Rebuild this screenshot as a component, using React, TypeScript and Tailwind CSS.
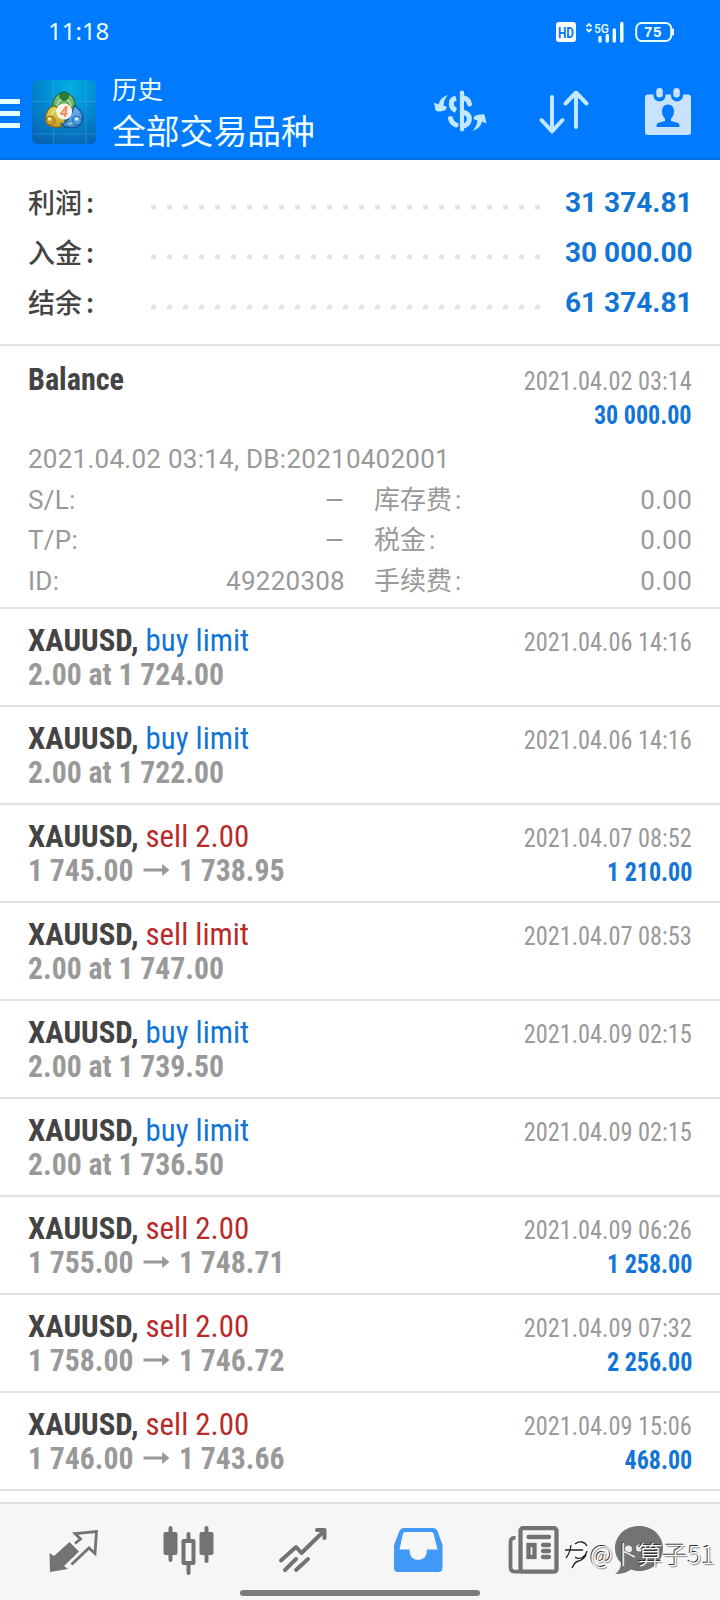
import React from "react";

type Deal = {
  kind: "buy" | "sell";
  action: string;
  time: string;
  at?: string;
  from?: string;
  to?: string;
  profit?: string;
};

const deals: Deal[] = [
  { kind: "buy", action: "buy limit", at: "2.00 at 1 724.00", time: "2021.04.06 14:16" },
  { kind: "buy", action: "buy limit", at: "2.00 at 1 722.00", time: "2021.04.06 14:16" },
  { kind: "sell", action: "sell 2.00", from: "1 745.00", to: "1 738.95", time: "2021.04.07 08:52", profit: "1 210.00" },
  { kind: "sell", action: "sell limit", at: "2.00 at 1 747.00", time: "2021.04.07 08:53" },
  { kind: "buy", action: "buy limit", at: "2.00 at 1 739.50", time: "2021.04.09 02:15" },
  { kind: "buy", action: "buy limit", at: "2.00 at 1 736.50", time: "2021.04.09 02:15" },
  { kind: "sell", action: "sell 2.00", from: "1 755.00", to: "1 748.71", time: "2021.04.09 06:26", profit: "1 258.00" },
  { kind: "sell", action: "sell 2.00", from: "1 758.00", to: "1 746.72", time: "2021.04.09 07:32", profit: "2 256.00" },
  { kind: "sell", action: "sell 2.00", from: "1 746.00", to: "1 743.66", time: "2021.04.09 15:06", profit: "468.00" },
];

const summary = [
  { label: "利润", value: "31 374.81" },
  { label: "入金", value: "30 000.00" },
  { label: "结余", value: "61 374.81" },
];

const details = [
  { l: "S/L:", v: "–", r: "库存费", rv: "0.00" },
  { l: "T/P:", v: "–", r: "税金", rv: "0.00" },
  { l: "ID:", v: "49220308", r: "手续费", rv: "0.00" },
];

const cond = "font-['Roboto_Condensed','Roboto',sans-serif]";

function StatusBar() {
  return (
    <div className="flex h-16 items-center pl-12 pr-[46px] text-[#f0ffff]">
      <span className="mb-0.5 font-['Noto_Sans',sans-serif] text-[24px] leading-none">11:18</span>
      <div className="ml-auto flex items-center">
        <svg width="120" height="24" viewBox="554 20 120 24">
          <rect x="556" y="22" width="20" height="20" rx="3" fill="#fff" />
          <text x="558" y="37.5" textLength="16" lengthAdjust="spacingAndGlyphs" className="fill-[#0079ff] font-['Roboto',sans-serif] text-[15px] font-bold">HD</text>
          <path d="M586.5 26.5l2.5-2.5 2.5 2.5M586.5 29l2.5 2.5 2.5-2.5" fill="none" stroke="#e6ffff" strokeWidth="1.8" />
          <text x="594" y="33" textLength="15" lengthAdjust="spacingAndGlyphs" className="fill-[#e6ffff] font-['Roboto',sans-serif] text-[13.5px] font-medium">5G</text>
          <path d="M600 37.5V41M607.3 35.5V41M614.3 30V41M621.8 23.5V41" fill="none" stroke="#f0ffff" strokeWidth="3.4" strokeLinecap="round" />
          <rect x="636.2" y="23" width="35" height="18" rx="5.5" fill="none" stroke="#e6ffff" strokeWidth="2" />
          <path d="M673 28.5V35.5" stroke="#e6ffff" strokeWidth="2" />
          <text x="644.3" y="37" textLength="17" className="fill-[#f0ffff] font-['Liberation_Sans',sans-serif] text-[14.5px] font-bold">75</text>
        </svg>
      </div>
    </div>
  );
}

function AppLogo() {
  return (
    <svg width="64" height="64" viewBox="0 0 64 64">
      <defs>
        <radialGradient id="bg" cx=".6" cy=".12" r=".95"><stop offset="0" stopColor="#00b0e4" /><stop offset=".5" stopColor="#0488d0" /><stop offset="1" stopColor="#0664b4" /></radialGradient>
        <linearGradient id="gr" x1="0" y1="0" x2="0" y2="1"><stop offset="0" stopColor="#8cc58a" /><stop offset="1" stopColor="#4c9a3a" /></linearGradient>
        <linearGradient id="ye" x1="0" y1="0" x2="0" y2="1"><stop offset="0" stopColor="#e8dc50" /><stop offset="1" stopColor="#c89a28" /></linearGradient>
        <linearGradient id="bl" x1="0" y1="0" x2="0" y2="1"><stop offset="0" stopColor="#6ab4ee" /><stop offset="1" stopColor="#3a8cd4" /></linearGradient>
      </defs>
      <rect width="64" height="64" rx="5" fill="url(#bg)" />
      <path d="M21.5 0V64M54 0V64M0 21.5H64M0 54H64" stroke="#5cc4ee" strokeOpacity=".3" />
      <path d="M32 13C39 13 43.500 19 43.500 27L40 33H24L20.500 27C20.500 19 25 13 32 13Z" fill="url(#gr)" stroke="#1f6a35" strokeWidth="1.200" />
      <path d="M22 26C28 28 34 36 33 45C29 48 21 48 16 45C11 40 14 28 22 26Z" fill="url(#ye)" stroke="#7a6a1c" strokeWidth="1.200" />
      <path d="M42 26C49 29 53 38 49 44C44 49 34 49 29 44C34 44 41 34 42 26Z" fill="url(#bl)" stroke="#14508c" strokeWidth="1.200" />
      <path d="M25 26Q26 19 32 19Q38 19 39.500 26M19 38Q19 31 25 30M36 44Q43 44 46 35" fill="none" stroke="#d8f0d8" strokeOpacity=".7" strokeWidth="1.400" />
      <circle cx="32.200" cy="16" r="4.200" fill="#2e7d3c" stroke="#1d5a2c" />
      <circle cx="18.500" cy="40.500" r="4.500" fill="#c99c30" stroke="#8a6a18" />
      <circle cx="17.500" cy="39" r="1.800" fill="#fbeaa0" />
      <circle cx="45" cy="40.500" r="4.500" fill="#4a9ee0" stroke="#1b5fa5" />
      <circle cx="44.500" cy="39" r="1.800" fill="#d8f0ff" />
      <circle cx="32.200" cy="31.500" r="8" fill="#f6f4ee" />
      <text x="32" y="36.800" textAnchor="middle" className="fill-[#f08858] font-['Roboto',sans-serif] text-[14.5px] font-bold italic">4</text>
    </svg>
  );
}

function Header() {
  return (
    <header className="h-40 shrink-0 border-b-2 border-[#0570dd] bg-[#007aff]">
      <StatusBar />
      <div className="flex h-[94px] text-[#f0ffff]">
        <div className="mt-[35px] flex h-[29px] w-5 flex-col justify-between">
          <i className="h-[5px] bg-[#e2ffff]" />
          <i className="h-[5px] bg-[#e2ffff]" />
          <i className="h-[5px] bg-[#e2ffff]" />
        </div>
        <div className="ml-3 mt-4"><AppLogo /></div>
        <div className="ml-4 mt-2 flex flex-col whitespace-nowrap font-['Noto_Sans_CJK_SC',sans-serif]">
          <span className="text-[25.5px] leading-[32px]">历史</span>
          <span className="mt-1 text-[33.8px] leading-[44px]">全部交易品种</span>
        </div>
        <svg className="ml-auto mt-5 shrink-0" width="264" height="56" viewBox="430 84 264 56">
          <g fill="none" stroke="#c2e8ff" strokeWidth="5">
            <path d="M462 92.500V129.500" strokeWidth="4.200" strokeLinecap="round" />
            <path d="M456 98C449.500 100 450 107.500 456 110.500" />
            <path d="M464 98Q468.500 99 469.500 104" strokeLinecap="round" />
            <path d="M450.500 118.500Q451.500 123 456 125" strokeLinecap="round" />
            <path d="M463.500 112.500C471 114 471.500 123.500 463.500 126" />
          </g>
          <path d="M448 95Q440 97.500 438.500 104.500L434 102.500L435.500 110.500Q440 112.500 445.500 110L447 107L443.500 105.500Q444 99 448 95ZM472.500 131Q480.500 128.500 482 121.500L486.500 123.500L484.500 114.500Q480 113.500 474.500 116L473.500 119L477.500 120.500Q476.500 127 472.500 131Z" fill="#c2e8ff" />
          <path d="M552 97V131M541.500 120L552 131.500L562.500 120M576 127V93M565.500 103.500L576 92.500L586.500 103.500" fill="none" stroke="#c2e8ff" strokeWidth="4" strokeLinecap="round" strokeLinejoin="round" />
          <path d="M648 94.500h5.500v1a6 6 0 0 0 12 0v-1h5.500v1a6 6 0 0 0 12 0v-1h5a3 3 0 0 1 3 3v34.500a3 3 0 0 1-3 3h-40a3 3 0 0 1-3-3v-34.500a3 3 0 0 1 3-3z" fill="#c8e2ff" />
          <rect x="656.300" y="88" width="6.500" height="9.500" rx="3.200" fill="#c8e2ff" />
          <rect x="673.300" y="88" width="6.500" height="9.500" rx="3.200" fill="#c8e2ff" />
          <path d="M668 104.500c4 0 6 3 6 6.500c0 3-1 5.500-3 7.500v2.500l7 2q1.500.5 1.500 4h-23q0-3.500 1.500-4l7-2v-2.500c-2-2-3-4.500-3-7.500c0-3.500 2-6.500 6-6.500z" fill="#007aff" />
        </svg>
        <div className="w-[26px] shrink-0" />
      </div>
    </header>
  );
}

function Summary() {
  return (
    <section className="h-[186px] shrink-0 border-b-2 border-[#e2e2e2] pt-[17px]">
      {summary.map((s) => (
        <div key={s.label} className="flex h-[50px] items-center pl-7 pr-7">
          <div className="flex w-[123px] font-['Noto_Sans_CJK_SC',sans-serif] text-[27px] font-medium leading-[50px] text-[#444]">
            {s.label}<span className="ml-1">:</span>
          </div>
          <svg className="mt-[9px]" width="390" height="6">
            {Array.from({ length: 25 }, (_, i) => (
              <circle key={i} cx={2.5 + i * 16} cy="3" r="2.6" fill="#e2e2e2" />
            ))}
          </svg>
          <div className="ml-auto w-[127px] whitespace-nowrap pt-0.5 font-['Roboto',sans-serif] text-[28px] font-bold leading-[50px] text-[#1275d6]">{s.value}</div>
        </div>
      ))}
    </section>
  );
}

function BalanceRow() {
  return (
    <section className="h-[263px] shrink-0 border-b-2 border-[#e2e2e2] px-7 pt-[15px]">
      <div className="flex justify-between">
        <div className={`${cond} origin-left scale-x-[0.942] text-[32px] font-bold leading-[36px] text-[#444]`}>Balance</div>
        <div className={`${cond} flex flex-col items-end text-[26px]`}>
          <span className="origin-right scale-x-[0.935] pt-[3px] leading-[34px] text-[#999]">2021.04.02 03:14</span>
          <span className="origin-right scale-x-[0.925] font-bold leading-[34px] text-[#1275d6]">30 000.00</span>
        </div>
      </div>
      <div className="mt-[7px] font-['Roboto','Noto_Sans_CJK_SC',sans-serif] text-[26px] leading-[40.5px] text-[#999]">
        <div className="tracking-[0.26px]">2021.04.02 03:14, DB:20210402001</div>
        {details.map((d) => (
          <div key={d.l} className="flex">
            <span className="w-[120px] tracking-[0.26px]">{d.l}</span>
            <span className={d.v === "–" ? "w-[197px] origin-right scale-x-[1.22] text-right" : "w-[197px] text-right tracking-[0.26px]"}>{d.v}</span>
            <span className="ml-[29px] flex">{d.r}<span className="ml-[3px]">:</span></span>
            <span className="ml-auto tracking-[0.26px]">{d.rv}</span>
          </div>
        ))}
      </div>
    </section>
  );
}

function DealRow({ deal }: { deal: Deal }) {
  return (
    <section className={`${cond} flex h-[98px] shrink-0 justify-between whitespace-nowrap border-b-2 border-[#e2e2e2] px-7 pt-[14px]`}>
      <div className="text-[32px] leading-[34px]">
        <div className="origin-left scale-x-[0.964]">
          <span className="font-bold text-[#444]">XAUUSD, </span>
          <span className={deal.kind === "buy" ? "text-[#1275d6]" : "text-[#b92b2b]"}>{deal.action}</span>
        </div>
        <div className="flex origin-left scale-x-[0.928] items-center font-bold text-[#999]">
          {deal.at ?? (
            <>
              {deal.from}
              <svg className="mx-[9px]" width="31" height="14" viewBox="0 0 30 14"><path d="M1 7H23" stroke="#999" strokeWidth="3" /><path d="M21 1L29 7L21 13Z" fill="#999" /></svg>
              {deal.to}
            </>
          )}
        </div>
      </div>
      <div className="flex flex-col items-end text-[26px] leading-[34px]">
        <span className="mt-[2px] origin-right scale-x-[0.935] text-[#999]">{deal.time}</span>
        {deal.profit && <span className="origin-right scale-x-[0.925] font-bold text-[#1275d6]">{deal.profit}</span>}
      </div>
    </section>
  );
}

function NavBar() {
  return (
    <nav className="relative mt-[11px] h-[98px] shrink-0 border-t-2 border-[#e0e0e0] bg-[#f6f6f6]">
      <svg width="720" height="96" viewBox="0 1504 720 96">
        <g fill="#737373">
          <path d="M49.500 1553L54 1556L69.500 1542L79 1551.500L64 1566L68 1569L50 1572Z" />
          <path d="M75 1543.500L80.500 1539L75 1533.500L96.500 1531.500L95 1553.500L89 1548L71.500 1564.500" fill="none" stroke="#737373" strokeWidth="2.800" />
          <rect x="163.500" y="1532" width="14" height="23" rx="2" /><rect x="199.500" y="1532" width="14" height="23" rx="2" />
          <path d="M170.500 1528V1560M206.500 1528V1561M188.500 1534V1541M188.500 1563V1573" stroke="#737373" strokeWidth="4" strokeLinecap="round" />
          <rect x="183.500" y="1541" width="10" height="22" fill="none" stroke="#737373" strokeWidth="4" strokeLinejoin="round" />
        </g>
        <g fill="none" stroke="#737373" strokeWidth="4" strokeLinecap="round" strokeLinejoin="round">
          <path d="M281 1560.500L296 1547L301.500 1553L323 1532M285 1570L296 1559M296 1570L308 1559" />
          <path d="M317 1530H324.500V1538" />
        </g>
        <path d="M404 1528H433Q436 1528 437.500 1531L442.500 1545V1568Q442.500 1572 438.500 1572H398Q394 1572 394 1568V1545L399.500 1531Q401 1528 404 1528ZM405 1532Q403.500 1532 403 1533.500L399.500 1549.500H409.500Q409.500 1560 418.200 1560Q427 1560 427 1549.500H437.500L433.500 1533.500Q433 1532 431.500 1532Z" fill="#4098f7" fillRule="evenodd" />
        <g fill="none" stroke="#737373" strokeWidth="4.300">
          <rect x="520.500" y="1528.200" width="36" height="43.500" rx="2.500" />
          <path d="M515.500 1538Q510.500 1537.500 510.500 1542V1567Q510.500 1571.700 515 1571.700H523" strokeWidth="3.800" />
          <path d="M528.500 1537H549M543 1545H549M543 1551H549M543 1557H549" strokeLinecap="round" />
          <rect x="528.500" y="1545" width="6" height="12" />
        </g>
        <path d="M639 1526C653 1526 663 1536 663 1548.500C663 1561 653 1571 639 1571Q635 1571 631 1569.500Q625 1574 615 1574Q621 1570 621 1563Q615 1557 615 1548.500C615 1536 625 1526 639 1526Z" fill="#737373" />
        <circle cx="628.500" cy="1549" r="3.500" fill="#eee" /><circle cx="639.500" cy="1548" r="3.500" fill="#eee" /><circle cx="650" cy="1549" r="3.500" fill="#eee" />
      </svg>
      <div className="absolute bottom-[4px] left-[240px] h-1.5 w-60 rounded-full bg-[#7c7c7c]" />
      <div className="absolute left-[564px] top-[30px] flex items-center whitespace-nowrap">
        <svg width="26" height="34" viewBox="0 0 26 34">
          <path d="M10 8C18 2 25 9 23 16Q21 23 12 23Q7 20 7 15ZM1 13H9L6 20L2 23Z" fill="#fff" />
          <path d="M2 22Q6 17 7 9M1 14H19M11 8C16 4 21 6 23 10M23 15C21 22 15 24 11 21M8 32Q11 25 15 25Q20 23 22 19" fill="none" stroke="#222" strokeWidth="1.300" />
        </svg>
        <span className="font-['Noto_Sans_CJK_SC',sans-serif] text-[25px] font-light leading-[38px] text-white [text-shadow:-1px_-1px_0_#333,1px_1px_1px_#888]">@卜算子51</span>
      </div>
    </nav>
  );
}

export default function App() {
  return (
    <div className="flex h-[1600px] w-[720px] flex-col overflow-hidden bg-white">
      <Header />
      <Summary />
      <BalanceRow />
      {deals.map((d, i) => (
        <DealRow key={i} deal={d} />
      ))}
      <NavBar />
    </div>
  );
}
